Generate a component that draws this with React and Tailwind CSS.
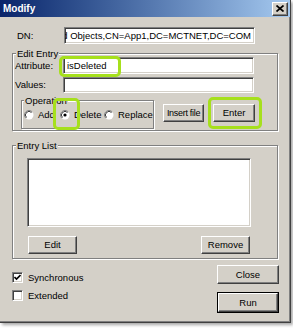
const raised =
  "bg-[#d4d0c8] border border-t-white border-l-white border-r-[#404040] border-b-[#404040] shadow-[inset_-1px_-1px_0_#808080,inset_1px_1px_0_#d4d0c8]";
const sunken =
  "bg-white border border-t-[#808080] border-l-[#808080] border-r-white border-b-white shadow-[inset_1px_1px_0_#404040,inset_-1px_-1px_0_#d4d0c8]";
const etched =
  "border border-[#808080] shadow-[inset_1px_1px_0_#ffffff,1px_1px_0_#ffffff]";

function Legend({ children, className }) {
  return (
    <div className={"h-0 -mt-[1px] flex items-center " + className}>
      <span className="bg-[#d4d0c8] px-[1px] leading-[13px] whitespace-nowrap">{children}</span>
    </div>
  );
}

function Radio({ checked }) {
  return (
    <svg width="10" height="10" viewBox="0 0 10 10" className="shrink-0">
      <circle cx="5" cy="5" r="4.5" fill="#ffffff" />
      <path d="M1.8 8.2 A4.5 4.5 0 0 1 8.2 1.8" stroke="#808080" strokeWidth="1" fill="none" />
      <path d="M2.5 7.5 A3.5 3.5 0 0 1 7.5 2.5" stroke="#404040" strokeWidth="1" fill="none" />
      {checked && <circle cx="5" cy="5" r="1.6" fill="#000000" />}
    </svg>
  );
}

function Check({ checked }) {
  return (
    <div className={"w-[11px] h-[11px] shrink-0 flex items-center justify-center " + sunken}>
      {checked && (
        <svg width="7" height="7" viewBox="0 0 7 7">
          <path d="M0.5 3 L2.5 5 L6.5 1" stroke="#000" strokeWidth="1.6" fill="none" />
        </svg>
      )}
    </div>
  );
}

function Btn({ children, className }) {
  return (
    <div className={"flex items-center justify-center whitespace-nowrap " + raised + " " + className}>
      {children}
    </div>
  );
}

export default function App() {
  return (
    <div className="w-[293px] h-[328px] bg-white font-['Liberation_Sans',Arial,sans-serif] text-[9.5px] text-black leading-none">
      <div className="relative w-[291px] h-[323px] bg-[#d4d0c8] border-r border-b border-[#404040] shadow-[inset_-1px_-1px_0_#808080,2px_2px_3px_rgba(0,0,0,0.35)] flex flex-col">
        {/* title bar */}
        <div className="h-[17px] flex items-center justify-between bg-linear-to-r from-[#0a246a] to-[#a6caf0] pl-[3px] pr-[2px]">
          <span className="text-white font-bold text-[10px]">Modify</span>
          <Btn className="w-[16px] h-[14px]">
            <svg width="8" height="7" viewBox="0 0 8 7">
              <path d="M0.5 0.5 L7.5 6.5 M7.5 0.5 L0.5 6.5" stroke="#000" strokeWidth="1.7" />
            </svg>
          </Btn>
        </div>

        {/* DN */}
        <div className="mt-[10px] flex items-center h-[17px]">
          <span className="ml-[17px] w-[47px]">DN:</span>
          <div className={"w-[191px] h-[17px] overflow-hidden flex items-center justify-end pr-[3px] " + sunken}>
            <span className="whitespace-nowrap shrink-0">CN=Deleted Objects,CN=App1,DC=MCTNET,DC=COM</span>
          </div>
        </div>

        {/* Edit Entry */}
        <div className={"mt-[9px] ml-[12px] w-[266px] h-[78px] flex flex-col " + etched}>
          <Legend className="pl-[3px]">Edit Entry</Legend>
          <div className="mt-[4px] flex items-center h-[17px]">
            <span className="ml-[2px] w-[48px]">Attribute:</span>
            <div className={"w-[191px] h-[17px] flex items-center pl-[3px] " + sunken}>isDeleted</div>
          </div>
          <div className="mt-[3px] flex items-center h-[16px]">
            <span className="ml-[2px] w-[48px]">Values:</span>
            <div className={"w-[191px] h-[16px] " + sunken}></div>
          </div>
          <div className="mt-[7px] flex items-start">
            <div className={"ml-[8px] w-[133px] h-[29px] flex flex-col " + etched}>
              <Legend className="pl-[2px]">Operation</Legend>
              <div className="mt-[9px] ml-[2px] flex items-center h-[11px]">
                <div className="w-[36px] flex items-center gap-[4px]">
                  <Radio />
                  <span>Add</span>
                </div>
                <div className="w-[44px] flex items-center gap-[4px]">
                  <Radio checked />
                  <span>Delete</span>
                </div>
                <div className="flex items-center gap-[4px]">
                  <Radio />
                  <span>Replace</span>
                </div>
              </div>
            </div>
            <Btn className="ml-[9px] mt-[4px] w-[41px] h-[18px] text-[9px] tracking-[-0.3px]">Insert file</Btn>
            <Btn className="ml-[9px] mt-[4px] w-[42px] h-[18px]">Enter</Btn>
          </div>
        </div>

        {/* Entry List */}
        <div className={"mt-[14px] ml-[12px] w-[266px] h-[114px] flex flex-col " + etched}>
          <Legend className="pl-[3px]">Entry List</Legend>
          <div className={"mt-[13px] ml-[14px] w-[224px] h-[69px] " + sunken}></div>
          <div className="mt-[9px] flex">
            <Btn className="ml-[15px] w-[49px] h-[18px]">Edit</Btn>
            <Btn className="ml-[124px] w-[49px] h-[18px]">Remove</Btn>
          </div>
        </div>

        {/* bottom */}
        <div className="mt-[6px] flex pl-[12px]">
          <div className="w-[205px] pt-[7px] flex flex-col">
            <div className="flex items-center gap-[5px] h-[11px]">
              <Check checked />
              <span>Synchronous</span>
            </div>
            <div className="mt-[7px] flex items-center gap-[5px] h-[11px]">
              <Check />
              <span>Extended</span>
            </div>
          </div>
          <div className="w-[62px] flex flex-col">
            <Btn className="h-[19px] w-[62px]">Close</Btn>
            <div className="mt-[8px] h-[21px] w-[62px] border border-black flex">
              <Btn className="flex-1">Run</Btn>
            </div>
          </div>
        </div>

        {/* highlight overlays */}
        <div className="absolute left-[59px] top-[56px] w-[62px] h-[21px] border-[3px] border-[#a6e01c] rounded-[5px]"></div>
        <div className="absolute left-[53px] top-[98px] w-[27px] h-[32px] border-[3px] border-[#a6e01c] rounded-[5px]"></div>
        <div className="absolute left-[208px] top-[97px] w-[54px] h-[32px] border-[3px] border-[#a6e01c] rounded-[5px]"></div>
      </div>
    </div>
  );
}
